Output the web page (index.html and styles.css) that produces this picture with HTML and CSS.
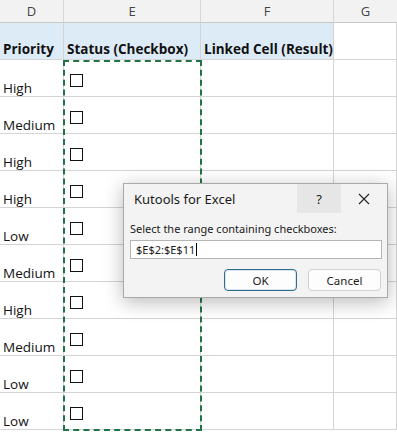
FILE: index.html
```html
<!DOCTYPE html>
<html lang="en">
<head>
  <meta charset="UTF-8" />
  <title>Kutools checkbox range</title>
  <link rel="stylesheet" href="styles.css">
</head>
<body>
  <div class="sheet">
    <div class="grid">
      <div class="col-head">D</div>
      <div class="col-head">E</div>
      <div class="col-head">F</div>
      <div class="col-head last">G</div>

      <div class="cell title">Priority</div>
      <div class="cell title">Status (Checkbox)</div>
      <div class="cell title">Linked Cell (Result)</div>
      <div class="cell blank"></div>

      <div class="cell">High</div><div class="cell box"><span class="check"></span></div><div class="cell"></div><div class="cell"></div>
      <div class="cell">Medium</div><div class="cell box"><span class="check"></span></div><div class="cell"></div><div class="cell"></div>
      <div class="cell">High</div><div class="cell box"><span class="check"></span></div><div class="cell"></div><div class="cell"></div>
      <div class="cell">High</div><div class="cell box"><span class="check"></span></div><div class="cell"></div><div class="cell"></div>
      <div class="cell">Low</div><div class="cell box"><span class="check"></span></div><div class="cell"></div><div class="cell"></div>
      <div class="cell">Medium</div><div class="cell box"><span class="check"></span></div><div class="cell"></div><div class="cell"></div>
      <div class="cell">High</div><div class="cell box"><span class="check"></span></div><div class="cell"></div><div class="cell"></div>
      <div class="cell">Medium</div><div class="cell box"><span class="check"></span></div><div class="cell"></div><div class="cell"></div>
      <div class="cell">Low</div><div class="cell box"><span class="check"></span></div><div class="cell"></div><div class="cell"></div>
      <div class="cell">Low</div><div class="cell box"><span class="check"></span></div><div class="cell"></div><div class="cell"></div>
    </div>

    <!-- copy marquee around E2:E11 -->
    <div class="marquee"></div>

    <div class="dialog">
      <div class="dialog-bar">
        <span class="dialog-title">Kutools for Excel</span>
        <span class="bar-btn help">?</span>
        <span class="bar-btn close">
          <svg width="12" height="12" viewBox="0 0 12 12"><path d="M1 1 L11 11 M11 1 L1 11" stroke="#222" stroke-width="1.1" fill="none"/></svg>
        </span>
      </div>
      <div class="dialog-body">
        <label for="range">Select the range containing checkboxes:</label>
        <div class="range-input" id="range">$E$2:$E$11<span class="caret"></span></div>
        <div class="dialog-buttons">
          <button class="btn default">OK</button>
          <button class="btn">Cancel</button>
        </div>
      </div>
    </div>
  </div>
</body>
</html>
```

FILE: styles.css
```css
body {
  margin: 0;
  background: #ffffff;
  font-family: 'Open Sans', 'Noto Sans', sans-serif;
  color: #111;
}

.sheet {
  position: relative;
  width: 397px;
  height: 432px;
  overflow: hidden;
}

.grid {
  display: grid;
  grid-template-columns: 64px 137px 133px 63px;
  grid-template-rows: 23px repeat(11, 37px);
}

.col-head {
  background: #f2f2f2;
  border-right: 1px solid #d6d6d6;
  border-bottom: 1px solid #c8c8c8;
  display: flex;
  align-items: center;
  justify-content: center;
  font-size: 13px;
  color: #444;
}

.col-head.last {
  border-right: none;
}

.cell {
  border-right: 1px solid #d4d4d4;
  border-bottom: 1px solid #d4d4d4;
  display: flex;
  align-items: flex-end;
  padding: 0 0 0 3px;
  font-size: 13.5px;
  line-height: 16px;
}

.cell.title {
  background: #ddebf7;
  font-weight: 700;
  padding-bottom: 2px;
}

.cell.blank {
  background: #fff;
}

.cell.box {
  align-items: flex-start;
  padding: 14px 0 0 6px;
}

.check {
  width: 11px;
  height: 11px;
  border: 1px solid #111;
  background: #fff;
}

.marquee {
  position: absolute;
  left: 63px;
  top: 60px;
  width: 135px;
  height: 367px;
  border: 2px dashed #217346;
}

.dialog {
  position: absolute;
  left: 123px;
  top: 183px;
  width: 263px;
  height: 113px;
  background: #f3f3f3;
  border: 1px solid #a9a9a9;
  box-shadow: 0 4px 18px rgba(0, 0, 0, 0.28);
  font-family: 'Noto Sans', 'Open Sans', sans-serif;
  font-size: 11px;
  color: #1a1a1a;
}

.dialog-bar {
  display: flex;
  align-items: center;
  height: 29px;
}

.dialog-title {
  flex: 1;
  padding-left: 10px;
  font-size: 13px;
}

.bar-btn {
  width: 44px;
  height: 29px;
  display: flex;
  align-items: center;
  justify-content: center;
  font-size: 13px;
}

.help {
  background: #e6e6e6;
}

.close {
  width: 46px;
}

.dialog-body {
  padding: 8px 5px 0 6px;
}

.dialog-body label {
  display: block;
  line-height: 15px;
  margin-bottom: 4px;
}

.range-input {
  display: flex;
  align-items: center;
  height: 17px;
  border: 1px solid #b5b5b5;
  background: #fff;
  padding-left: 5px;
  font-size: 11px;
}

.caret {
  width: 1px;
  height: 13px;
  background: #000;
  margin-left: 1px;
}

.dialog-buttons {
  display: flex;
  justify-content: flex-end;
  gap: 11px;
  margin-top: 10px;
  padding-right: 1px;
}

.btn {
  width: 73px;
  height: 22px;
  border: 1px solid #cfcfcf;
  border-radius: 4px;
  background: #fdfdfd;
  font-family: inherit;
  font-size: 11.5px;
  color: #1a1a1a;
  padding: 0;
}

.btn.default {
  border: 1px solid #2f6b8a;
  box-shadow: inset 0 0 0 1px #d7e6ee;
}
```
